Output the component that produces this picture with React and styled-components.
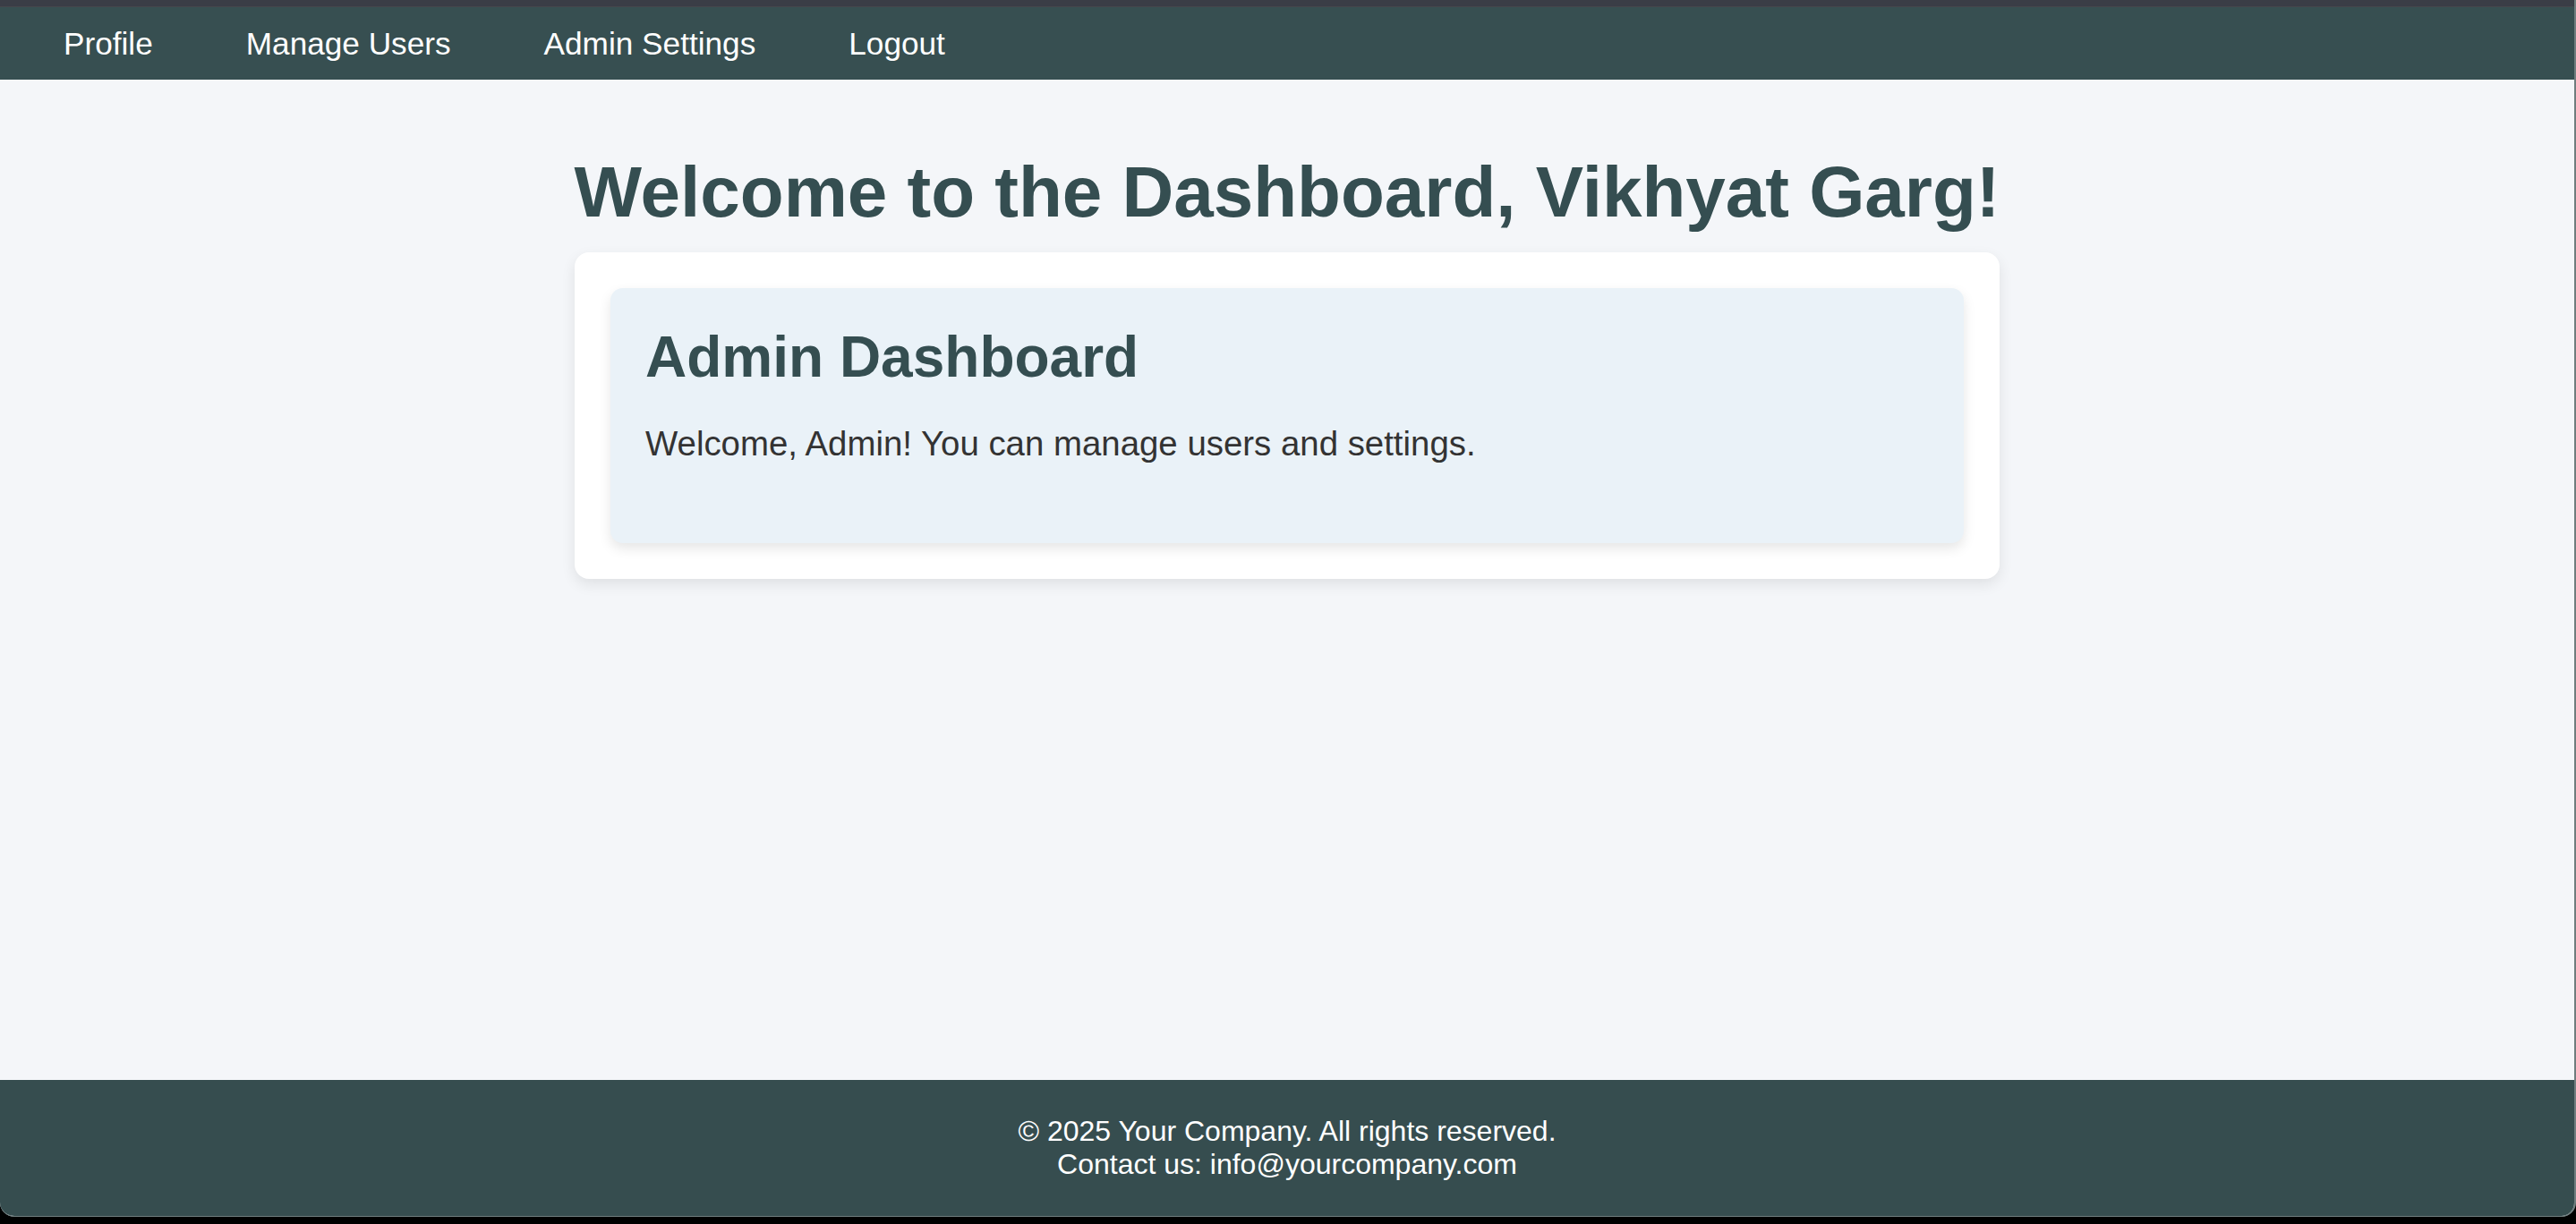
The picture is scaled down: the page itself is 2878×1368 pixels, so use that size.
import React from "react";
import styled, { createGlobalStyle } from "styled-components";

const GlobalStyle = createGlobalStyle`
  html, body {
    margin: 0;
    padding: 0;
    background: #000;
  }
  body {
    font-family: "Liberation Sans", Arial, Helvetica, sans-serif;
  }
`;

const navLinks = ["Profile", "Manage Users", "Admin Settings", "Logout"];

function App() {
  return (
    <>
      <GlobalStyle />
      <Window>
        <ChromeStrip />
        <Nav>
          {navLinks.map((label) => (
            <NavLink key={label} href="#">
              {label}
            </NavLink>
          ))}
        </Nav>
        <Main>
          <Title>Welcome to the Dashboard, Vikhyat Garg!</Title>
          <Card>
            <Panel>
              <PanelTitle>Admin Dashboard</PanelTitle>
              <PanelText>
                Welcome, Admin! You can manage users and settings.
              </PanelText>
            </Panel>
          </Card>
        </Main>
        <Footer>
          <FooterLine>© 2025 Your Company. All rights reserved.</FooterLine>
          <FooterLine>Contact us: info@yourcompany.com</FooterLine>
        </Footer>
      </Window>
    </>
  );
}

export default App;

const Window = styled.div`
  display: flex;
  flex-direction: column;
  height: 1360px;
  box-sizing: border-box;
  background: #f4f6f9;
  border-right: 2px solid #6f7d7e;
  border-bottom: 1px solid #6f7d7e;
  border-radius: 0 0 16px 16px;
  overflow: hidden;
`;

const ChromeStrip = styled.div`
  height: 8px;
  background: #3a3d46;
  border-bottom: 1px solid #45474c;
  box-sizing: border-box;
`;

const Nav = styled.nav`
  display: flex;
  align-items: center;
  gap: 104px;
  padding: 20px 0 20px 71px;
  background: #374f51;
`;

const NavLink = styled.a`
  color: #fff;
  text-decoration: none;
  font-size: 35.2px;
  line-height: 41px;
`;

const Main = styled.main`
  flex: 1;
  display: flex;
  flex-direction: column;
  align-items: center;
`;

const Title = styled.h1`
  margin: 80px 0 21px;
  white-space: nowrap;
  font-size: 80px;
  font-weight: 700;
  color: #354e51;
`;

const Card = styled.section`
  width: 1592px;
  box-sizing: border-box;
  padding: 40px;
  background: #fff;
  border-radius: 16px;
  box-shadow: 0 6px 16px rgba(0, 0, 0, 0.09);
`;

const Panel = styled.div`
  padding: 40px 40px 89px 39px;
  background: #eaf2f8;
  border-radius: 14px;
  box-shadow: 0 6px 14px rgba(0, 0, 0, 0.1);
`;

const PanelTitle = styled.h2`
  margin: 0;
  font-size: 64px;
  font-weight: 700;
  color: #354e51;
`;

const PanelText = styled.p`
  margin: 38px 0 0;
  font-size: 38.4px;
  color: #333;
`;

const Footer = styled.footer`
  padding: 39px 0;
  background: #364d4f;
  text-align: center;
`;

const FooterLine = styled.p`
  margin: 0;
  color: #fff;
  font-size: 32px;
`;
